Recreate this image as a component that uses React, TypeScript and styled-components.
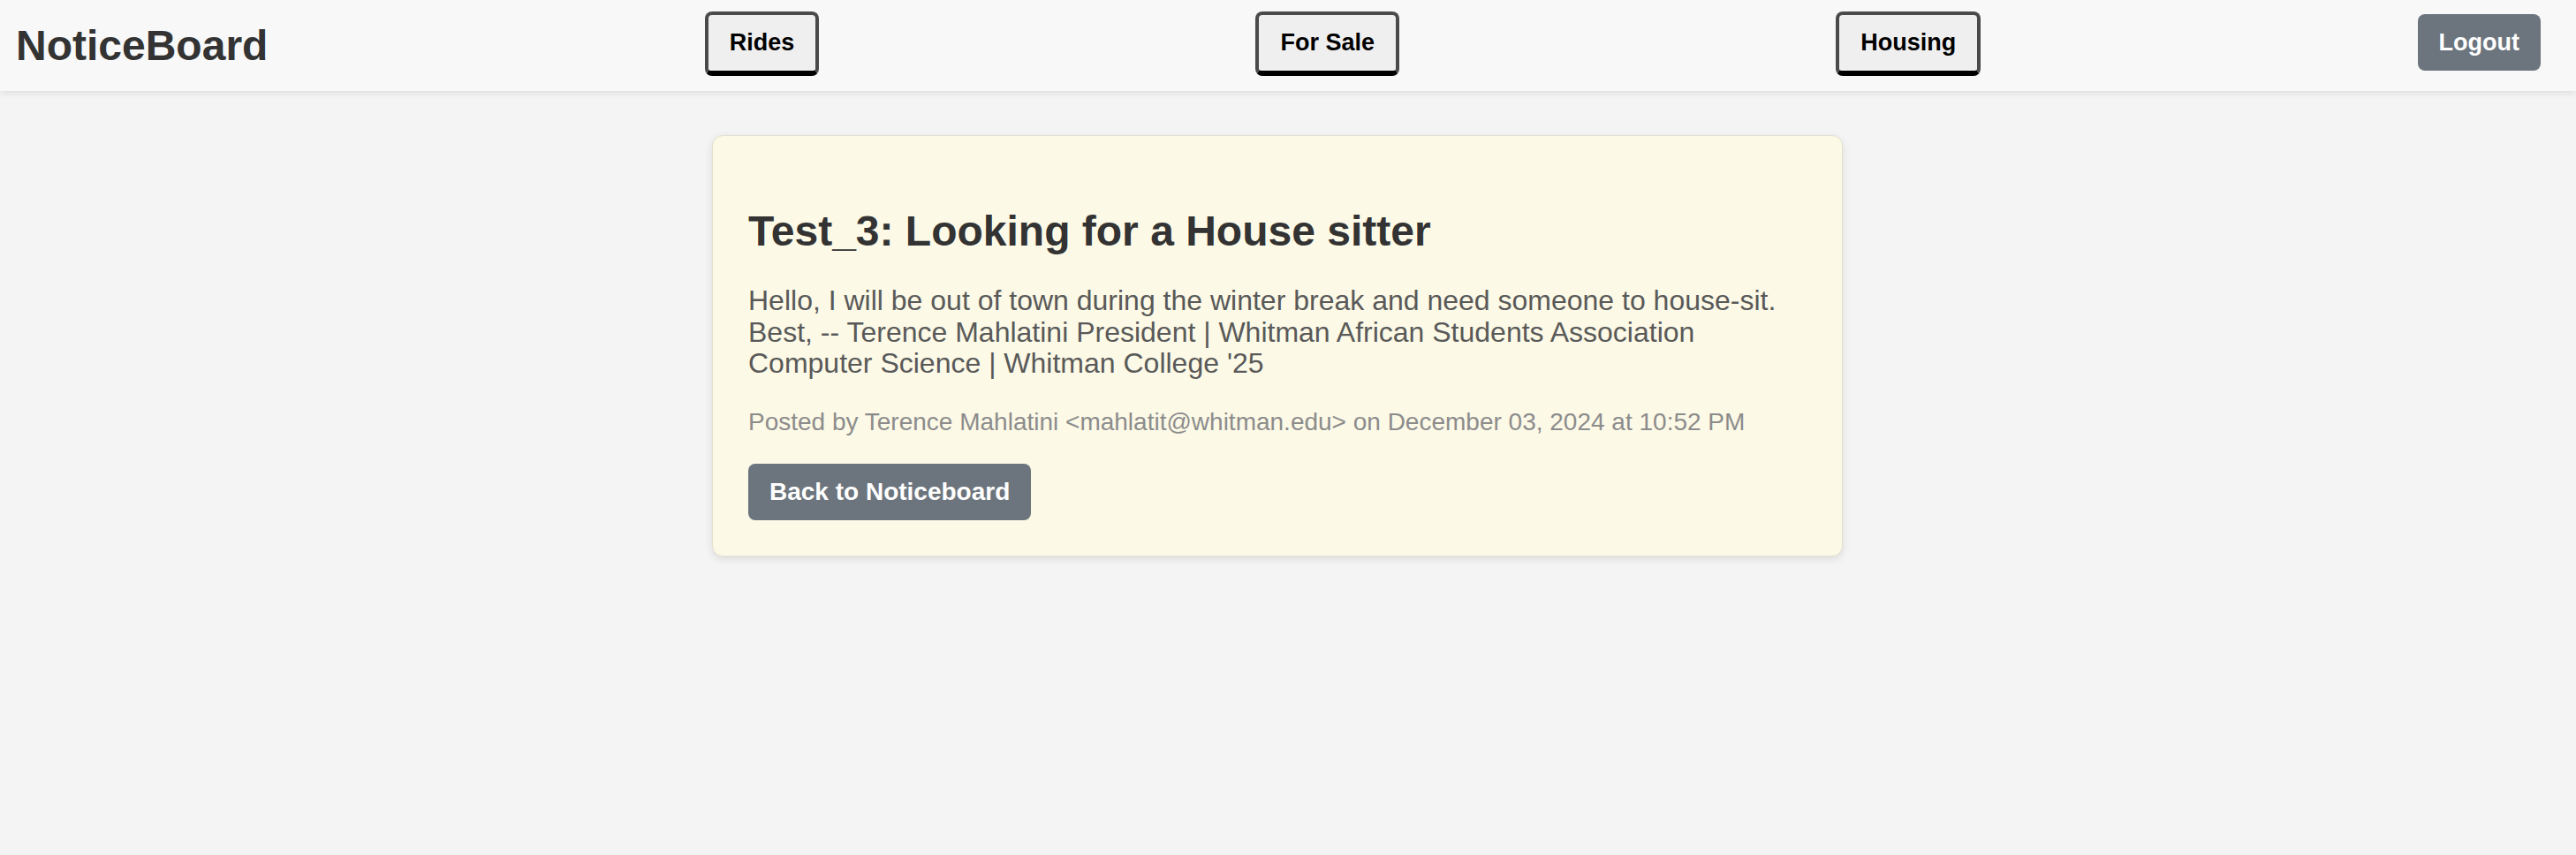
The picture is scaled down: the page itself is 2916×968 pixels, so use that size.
import React from "react";
import styled, { createGlobalStyle } from "styled-components";

const GlobalStyle = createGlobalStyle`
  html, body {
    margin: 0;
    padding: 0;
    background: #f4f4f4;
    font-family: "Liberation Sans", Arial, Helvetica, sans-serif;
  }
  * { box-sizing: border-box; }
`;

const Page = styled.div`
  min-height: 968px;
  background: #f4f4f4;
`;

const Header = styled.header`
  height: 103px;
  display: flex;
  align-items: center;
  justify-content: space-between;
  padding: 0 40px 4px 18px;
  background: #f8f8f8;
  box-shadow: 0 2px 8px rgba(0, 0, 0, 0.1);
  position: relative;
  z-index: 1;
`;

const Brand = styled.h1`
  margin: 4px 0 0 0;
  font-size: 48px;
  line-height: 55px;
  font-weight: 700;
  color: #333;
`;

const NavButton = styled.button`
  font-family: inherit;
  font-size: 27px;
  line-height: 31px;
  font-weight: 700;
  color: #000;
  background: #efefef;
  padding: 16px 24px;
  border: 4px solid #4a4a4a;
  border-bottom: 6px solid #000;
  border-radius: 8px;
  cursor: pointer;
`;

const SolidButton = styled.button<{ $size?: number; $lift?: number }>`
  font-family: inherit;
  font-size: ${(p) => p.$size ?? 27}px;
  line-height: 32px;
  font-weight: 700;
  color: #fff;
  background: #6c757d;
  padding: 16px 24px;
  margin-bottom: ${(p) => p.$lift ?? 0}px;
  border: none;
  border-radius: 8px;
  cursor: pointer;
`;

const Main = styled.main`
  display: flex;
  justify-content: center;
  padding: 50px 24px 0 0;
`;

const Card = styled.article`
  width: 1280px;
  background: #fcf9e6;
  border: 1px solid #e4e0cf;
  border-radius: 12px;
  box-shadow: 0 3px 10px rgba(0, 0, 0, 0.1);
  padding: 40px;
  display: flex;
  flex-direction: column;
  align-items: flex-start;
`;

const Title = styled.h2`
  margin: 40px 0 34px;
  font-size: 48px;
  line-height: 55px;
  font-weight: 700;
  color: #333;
`;

const Body = styled.p`
  margin: 0 0 32px;
  font-size: 32px;
  line-height: 35.5px;
  color: #595959;
`;

const Meta = styled.p`
  margin: 0 0 31px;
  font-size: 28px;
  line-height: 32px;
  color: #8c8c8c;
`;

export default function App() {
  return (
    <Page>
      <GlobalStyle />
      <Header>
        <Brand>NoticeBoard</Brand>
        <NavButton>Rides</NavButton>
        <NavButton>For Sale</NavButton>
        <NavButton>Housing</NavButton>
        <SolidButton $lift={4}>Logout</SolidButton>
      </Header>
      <Main>
        <Card>
          <Title>Test_3: Looking for a House sitter</Title>
          <Body>
            Hello, I will be out of town during the winter break and need someone to house-sit.
            Best, -- Terence Mahlatini President | Whitman African Students Association Computer
            Science | Whitman College '25
          </Body>
          <Meta>
            Posted by Terence Mahlatini &lt;mahlatit@whitman.edu&gt; on December 03, 2024 at 10:52 PM
          </Meta>
          <SolidButton $size={28}>Back to Noticeboard</SolidButton>
        </Card>
      </Main>
    </Page>
  );
}
